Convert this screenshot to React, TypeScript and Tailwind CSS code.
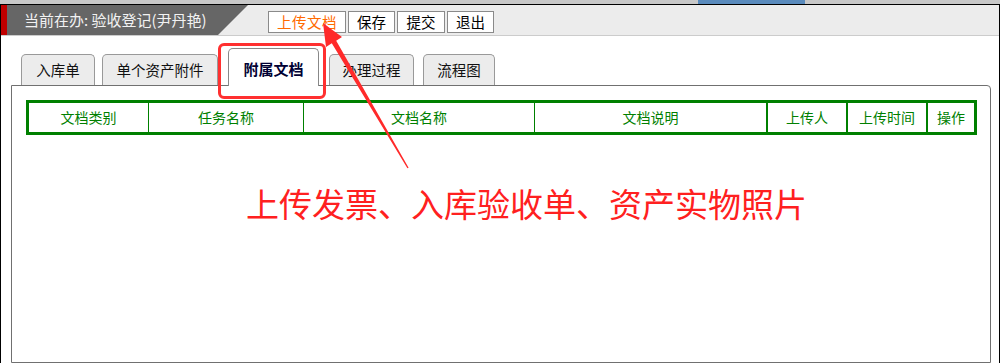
import React from "react";

const tabs = [
  { label: "入库单", cls: "ml-[10px] w-[74px]", active: false },
  { label: "单个资产附件", cls: "ml-[7px] w-[116px]", active: false },
  { label: "附属文档", cls: "ml-[10px] w-[91px]", active: true },
  { label: "办理过程", cls: "ml-[10px] w-[85px]", active: false },
  { label: "流程图", cls: "ml-[9px] w-[72px]", active: false },
];

const cols = [
  { label: "文档类别", cls: "w-[120px] border-r border-[#008000]" },
  { label: "任务名称", cls: "w-[155px] border-r border-[#008000]" },
  { label: "文档名称", cls: "w-[231px] border-r border-[#008000]" },
  { label: "文档说明", cls: "w-[233px] border-r-2 border-[#008000]" },
  { label: "上传人", cls: "w-[80px] border-r-2 border-[#008000]" },
  { label: "上传时间", cls: "w-[80px] border-r-2 border-[#008000]" },
  { label: "操作", cls: "flex-1" },
];

export default function App() {
  return (
    <div className="relative w-[1000px] h-[363px] overflow-hidden bg-white [font-family:'Noto_Sans_CJK_SC','Noto_Sans',sans-serif]">
      <div className="h-[4px] bg-[#c8c8c8] flex">
        <div className="ml-[698px] w-[107px] h-full bg-[#5a8bbd]" />
      </div>
      <div className="h-[359px] flex flex-col border-x border-t border-black">
        {/* header */}
        <div className="h-[31px] flex bg-[#ececec] border-b border-[#cccccc] shrink-0">
          <div className="w-[6px] h-full bg-[#c00000]" />
          <div className="w-[241px] h-full bg-[#666666] [clip-path:polygon(0_0,100%_0,calc(100%-30px)_100%,0_100%)] flex items-center pl-[17px] text-[15px] text-[#f2f2f2] whitespace-nowrap">
            当前在办: 验收登记(尹丹艳)
          </div>
          <div className="flex ml-[20px] mt-[6px] h-[22px] gap-[2px] text-[14.5px] leading-none">
            <div className="w-[78px] h-full border border-[#8a8a8a] bg-white flex items-center justify-center text-[#ff6a00] tracking-[0.5px]">
              上传文档
            </div>
            <div className="w-[47px] h-full border border-[#8a8a8a] bg-white flex items-center justify-center text-black">
              保存
            </div>
            <div className="w-[48px] h-full border border-[#8a8a8a] bg-white flex items-center justify-center text-black">
              提交
            </div>
            <div className="w-[47px] h-full border border-[#8a8a8a] bg-white flex items-center justify-center text-black">
              退出
            </div>
          </div>
        </div>
        {/* body */}
        <div className="flex-1 flex flex-col pl-[10px] pr-[8px]">
          <div className="h-[49px] flex items-end shrink-0">
            {tabs.map((t) =>
              t.active ? (
                <div
                  key={t.label}
                  className={`${t.cls} relative z-10 h-[38px] -mb-px bg-white border border-b-0 border-[#888888] rounded-t-[5px] flex items-center justify-center pt-[4px] text-[15px] font-bold text-[#000033]`}
                >
                  {t.label}
                </div>
              ) : (
                <div
                  key={t.label}
                  className={`${t.cls} h-[31px] bg-[#ececec] border border-b-0 border-[#999999] rounded-t-[5px] flex items-center justify-center text-[14.5px] text-[#111111]`}
                >
                  {t.label}
                </div>
              )
            )}
          </div>
          <div className="flex-1 border border-[#707070] rounded-tr-[4px] bg-white">
            <div className="mt-[14px] ml-[14px] w-[951px] h-[35px] border-[3px] border-[#008000] flex text-[14px] text-[#008000]">
              {cols.map((c) => (
                <div key={c.label} className={`${c.cls} h-full flex items-center justify-center`}>
                  {c.label}
                </div>
              ))}
            </div>
          </div>
        </div>
      </div>

      {/* annotations */}
      <div className="absolute left-[218px] top-[43px] w-[108px] h-[56px] border-[3px] border-[#ff3030] rounded-[6px] z-20" />
      <svg className="absolute left-0 top-0 z-30 pointer-events-none" width="1000" height="363" viewBox="0 0 1000 363">
        <polygon
          points="323,23 342,37 336.2,40.7 408.6,167.7 407.4,168.3 331.8,43.3 326,47"
          fill="#ff2a2a"
        />
      </svg>
      <div className="absolute left-[246px] top-[187px] z-20 text-[33px] leading-[33px] text-[#ff2020] whitespace-nowrap">
        上传发票、入库验收单、资产实物照片
      </div>
    </div>
  );
}
